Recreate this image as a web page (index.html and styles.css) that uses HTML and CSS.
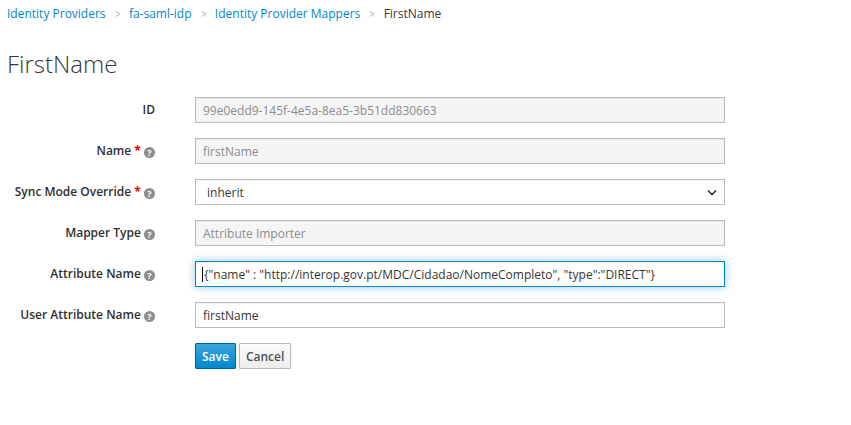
FILE: index.html
```html
<!DOCTYPE html>
<html>
<head>
<meta charset="utf-8">
<link rel="stylesheet" href="styles.css">
</head>
<body>
<ol class="crumbs">
  <li><a>Identity Providers</a></li>
  <li class="sep">&gt;</li>
  <li><a>fa-saml-idp</a></li>
  <li class="sep">&gt;</li>
  <li><a>Identity Provider Mappers</a></li>
  <li class="sep">&gt;</li>
  <li class="current">FirstName</li>
</ol>
<h1 class="title">FirstName</h1>
<form class="form">
  <label class="lbl">ID</label>
  <div class="ctl"><input class="inp dis" value="99e0edd9-145f-4e5a-8ea5-3b51dd830663" disabled></div>

  <label class="lbl">Name <span class="req">*</span> <span class="help">?</span></label>
  <div class="ctl"><input class="inp dis" value="firstName" disabled></div>

  <label class="lbl">Sync Mode Override <span class="req">*</span> <span class="help">?</span></label>
  <div class="ctl"><div class="inp sel"><span>inherit</span>
    <svg class="chev" width="10" height="7" viewBox="0 0 10 7"><path d="M1 1.5 L5 5.5 L9 1.5" fill="none" stroke="#363636" stroke-width="1.6"/></svg></div></div>

  <label class="lbl">Mapper Type <span class="help">?</span></label>
  <div class="ctl"><input class="inp dis" value="Attribute Importer" disabled></div>

  <label class="lbl">Attribute Name <span class="help">?</span></label>
  <div class="ctl"><div class="inp focus"><span class="caret"></span>{"name" : "http://interop.gov.pt/MDC/Cidadao/NomeCompleto", "type":"DIRECT"}</div></div>

  <label class="lbl">User Attribute Name <span class="help">?</span></label>
  <div class="ctl"><input class="inp" value="firstName"></div>

  <div></div>
  <div class="btns">
    <button type="button" class="btn primary">Save</button>
    <button type="button" class="btn">Cancel</button>
  </div>
</form>
</body>
</html>
```

FILE: styles.css
```css
html, body {
  margin: 0;
  padding: 0;
  background: #fff;
}
body {
  font-family: "Open Sans", "Liberation Sans", sans-serif;
  font-size: 12px;
  color: #363636;
}
.crumbs {
  list-style: none;
  margin: 0;
  padding: 3px 0 0 7px;
  display: flex;
  align-items: center;
  height: 20px;
  font-size: 12px;
}
.crumbs li { white-space: nowrap; }
.crumbs a { color: #0088ce; }
.crumbs .sep {
  color: #9c9c9c;
  font-size: 11px;
  padding: 0 8px 0 9px;
  transform: scaleX(0.8);
}
.crumbs .current { color: #363636; }
.title {
  margin: 26px 0 0 7px;
  font-size: 24px;
  font-weight: 300;
  line-height: 30px;
  color: #363636;
}
.form {
  display: grid;
  grid-template-columns: 155px 530px;
  column-gap: 40px;
  row-gap: 15px;
  margin-top: 18px;
}
.lbl {
  text-align: right;
  font-weight: 600;
  font-size: 12px;
  line-height: 26px;
  height: 26px;
  white-space: nowrap;
  color: #2f2f2f;
}
.req { color: #e00; font-weight: 700; }
.help {
  display: inline-block;
  width: 11px;
  height: 11px;
  border-radius: 50%;
  background: #8b8d8f;
  color: #fff;
  font-size: 9px;
  font-weight: 700;
  line-height: 11px;
  text-align: center;
  vertical-align: -1px;
}
.ctl { height: 26px; }
.inp {
  box-sizing: border-box;
  width: 530px;
  height: 26px;
  border: 1px solid #bbb;
  background: #fff;
  padding: 2px 7px;
  font-family: "Open Sans", "Liberation Sans", sans-serif;
  font-size: 12px;
  color: #363636;
  display: flex;
  align-items: center;
  margin: 0;
  outline: none;
  box-shadow: inset 0 1px 1px rgba(3,3,3,0.05);
}
.inp.dis {
  background: #f5f5f5;
  color: #8b8d8f;
}
.sel {
  justify-content: space-between;
  padding-left: 11px;
  padding-right: 7px;
}
.focus {
  border-color: #0088ce;
  box-shadow: inset 0 1px 1px rgba(3,3,3,0.075), 0 0 8px rgba(0,136,206,0.45);
  white-space: nowrap;
  padding-left: 6px;
}
.caret {
  display: inline-block;
  width: 1px;
  height: 15px;
  background: #000;
  margin-right: 1px;
}
.btns {
  display: flex;
  gap: 3px;
}
.btn {
  height: 26px;
  box-sizing: border-box;
  padding: 0 6px;
  border: 1px solid #bbb;
  background: linear-gradient(#fafafa, #ededed);
  color: #4d5258;
  font-family: "Open Sans", "Liberation Sans", sans-serif;
  font-size: 12px;
  font-weight: 600;
  border-radius: 1px;
  box-shadow: 0 2px 3px rgba(3,3,3,0.1);
}
.btn.primary {
  background: linear-gradient(#39a5dc, #0088ce);
  border-color: #00659c;
  color: #fff;
}
```
